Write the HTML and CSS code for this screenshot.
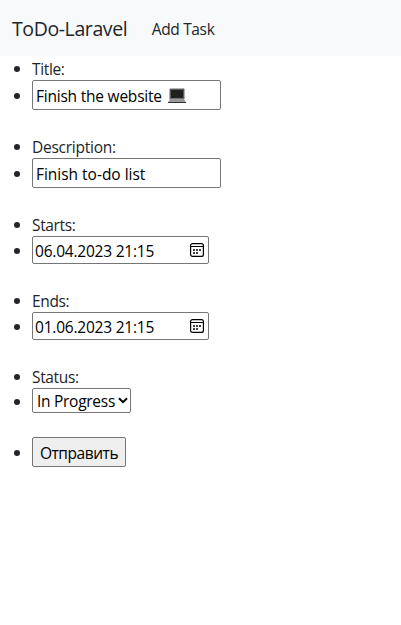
FILE: index.html
```html
<!DOCTYPE html>
<html lang="en">
<head>
<meta charset="utf-8">
<title>ToDo-Laravel</title>
<link rel="stylesheet" href="styles.css">
</head>
<body>
<nav class="navbar">
  <a class="brand">ToDo-Laravel</a>
  <a class="nav-link">Add Task</a>
</nav>
<form>
  <ul class="fields">
    <li class="label">Title:</li>
    <li class="control"><div class="field">
      <input class="box text title" type="text" value="Finish the website">
      <svg class="laptop" width="20" height="16" viewBox="0 0 20 16"><path d="M3.5 1.5h13v9h-13z" fill="#202020" stroke="#777"/><path d="M3 11V1h14v10" fill="none" stroke="#222" stroke-width=".7"/><path d="M3 11h14l1.7 3H1.3z" fill="#999"/><path d="M1 14.5h18" stroke="#333"/></svg>
    </div></li>
    <li class="label description">Description:</li>
    <li class="control"><div class="field"><input class="box text list" type="text" value="Finish to-do list"></div></li>
    <li class="label">Starts:</li>
    <li class="control"><div class="field">
      <input class="box date" type="text" value="06.04.2023 21:15">
      <svg class="calendar" width="14" height="14" viewBox="0 0 14 14"><rect x=".6" y=".6" width="12.8" height="12.8" rx="2" fill="none" stroke="#000" stroke-width="1.2"/><path d="M1 3.5h12" stroke="#000"/><path d="M3 7h2M6 7h2M9 7h2M3 10h2M6 10h2" stroke="#000" stroke-width="1.6"/></svg>
    </div></li>
    <li class="label">Ends:</li>
    <li class="control"><div class="field">
      <input class="box date" type="text" value="01.06.2023 21:15">
      <svg class="calendar" width="14" height="14" viewBox="0 0 14 14"><rect x=".6" y=".6" width="12.8" height="12.8" rx="2" fill="none" stroke="#000" stroke-width="1.2"/><path d="M1 3.5h12" stroke="#000"/><path d="M3 7h2M6 7h2M9 7h2M3 10h2M6 10h2" stroke="#000" stroke-width="1.6"/></svg>
    </div></li>
    <li class="label">Status:</li>
    <li class="control"><div class="field">
      <select class="box status"><option>In Progress</option></select>
      <svg class="chevron" width="10" height="7" viewBox="0 0 10 7"><path d="M1 1.2l4 4 4-4" fill="none" stroke="#000" stroke-width="2"/></svg>
    </div></li>
    <li class="control"><button class="box submit" type="button">Отправить</button></li>
  </ul>
</form>
</body>
</html>
```
FILE: styles.css
```css
* { box-sizing: border-box; }
body {
  margin: 0;
  background: #fff;
  color: #212529;
  font: 15.5px/24px "Open Sans", "Noto Sans", sans-serif;
  letter-spacing: -.35px;
}
.navbar {
  display: flex;
  align-items: center;
  gap: 24.5px;
  height: 56px;
  padding: 2px 12px 0;
  background: #f8f9fa;
}
.brand { font-size: 19.5px; line-height: 30px; letter-spacing: -.4px; }
.nav-link { letter-spacing: -.35px; }
.fields { margin: 0; padding: 0 0 0 32px; list-style: none; }
.fields li { position: relative; display: flex; align-items: center; }
.fields li::before {
  content: "";
  position: absolute;
  left: -18px;
  top: calc(50% - 2px);
  width: 6px;
  height: 6px;
  border-radius: 50%;
  background: #212529;
}
.fields .label { height: 24px; padding-top: 2px; }
.description { letter-spacing: -.25px; }
.control { margin-bottom: 24px; }
.field { position: relative; display: flex; }
.box {
  display: block;
  margin: 0;
  border: 1px solid #767676;
  border-radius: 2px;
  background: #fff;
  color: #000;
  font: inherit;
  letter-spacing: inherit;
  outline: none;
}
.text { width: 189px; height: 30px; padding: 3px 3px 1px; }
.title { letter-spacing: -.22px; }
.list { letter-spacing: -.02px; }
.date { width: 177px; height: 28px; padding: 3px 2px 1px; letter-spacing: -.22px; }
.status { width: 99px; height: 25px; padding: 1px 4px 0; line-height: 23px; appearance: none; letter-spacing: -.28px; }
.submit { width: 94px; height: 30px; padding: 3px 0 1px; background: #efefef; white-space: nowrap; letter-spacing: -.45px; }
.laptop { position: absolute; left: 135px; top: 8px; }
.calendar { position: absolute; left: 158px; top: 7px; }
.chevron { position: absolute; left: 86px; top: 9px; }
```
